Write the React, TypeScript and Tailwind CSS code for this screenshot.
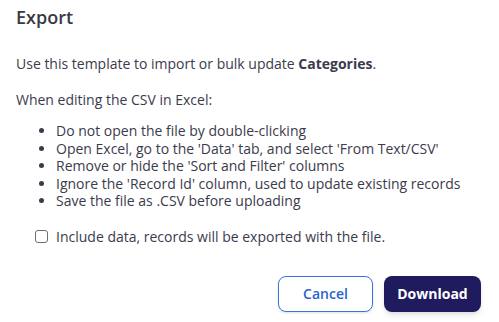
export default function App() {
  const tips = [
    'Do not open the file by double-clicking',
    "Open Excel, go to the 'Data' tab, and select 'From Text/CSV'",
    "Remove or hide the 'Sort and Filter' columns",
    "Ignore the 'Record Id' column, used to update existing records",
    'Save the file as .CSV before uploading',
  ];

  return (
    <div className="w-[499px] h-[322px] bg-white font-['Open_Sans',sans-serif] text-[#3b3b4c] overflow-hidden">
      <div className="px-4 pt-[5px]">
        <h1 className="text-[18px] leading-6 font-semibold text-[#393946]">Export</h1>

        <p className="mt-[26px] text-[14px] leading-[17.5px]">
          Use this template to import or bulk update <span className="font-bold">Categories</span>.
        </p>

        <p className="mt-[18.5px] text-[14px] leading-[17.5px]">When editing the CSV in Excel:</p>

        <ul className="mt-[13.5px] pl-[40px] list-disc text-[14px] leading-[17.5px] marker:text-[#3b3b4c]">
          {tips.map((tip) => (
            <li key={tip}>{tip}</li>
          ))}
        </ul>

        <label className="mt-[18.5px] ml-[19px] flex items-center gap-2 text-[14px] leading-[17.5px]">
          <input
            type="checkbox"
            className="appearance-none w-[13px] h-[13px] border border-[#6e6e6e] rounded-[3px] bg-white m-0"
          />
          <span>Include data, records will be exported with the file.</span>
        </label>
      </div>

      <div className="mt-[30px] pr-[18px] flex justify-end gap-[11px]">
        <button className="w-[95px] h-[36px] rounded-[8px] border border-[#3a74e0] bg-white text-[#2b63cc] text-[14px] font-semibold shadow-sm">
          Cancel
        </button>
        <button className="w-[97px] h-[36px] rounded-[8px] bg-[#1f1b5e] text-white text-[14px] font-bold shadow-md">
          Download
        </button>
      </div>
    </div>
  );
}
